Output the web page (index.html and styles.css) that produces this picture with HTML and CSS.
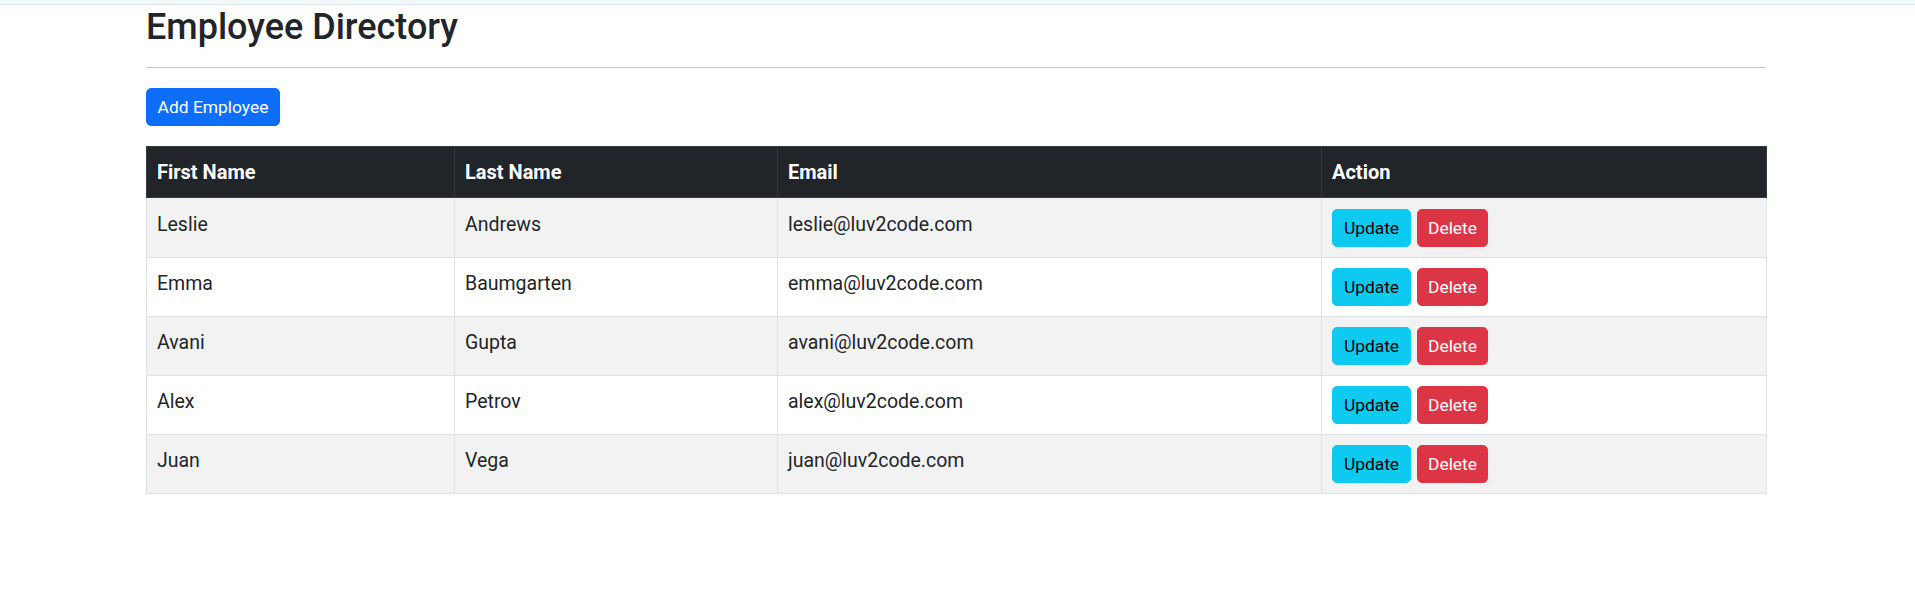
FILE: index.html
```html
<!DOCTYPE html>
<html lang="en">
<head>
<meta charset="utf-8">
<title>Employee Directory</title>
<link rel="stylesheet" href="styles.css">
</head>
<body>
<div class="topbar"></div>
<div class="container">
  <h2 class="title">Employee Directory</h2>
  <hr class="divider">
  <div class="toolbar">
    <button class="btn btn-primary btn-add">Add Employee</button>
  </div>
  <table class="table">
    <colgroup>
      <col class="col-first">
      <col class="col-last">
      <col class="col-email">
      <col class="col-action">
    </colgroup>
    <thead>
      <tr><th>First Name</th><th>Last Name</th><th>Email</th><th>Action</th></tr>
    </thead>
    <tbody>
      <tr>
        <td>Leslie</td><td>Andrews</td><td>leslie@luv2code.com</td>
        <td><div class="row-actions"><button class="btn btn-info btn-update">Update</button><button class="btn btn-danger btn-delete">Delete</button></div></td>
      </tr>
      <tr>
        <td>Emma</td><td>Baumgarten</td><td>emma@luv2code.com</td>
        <td><div class="row-actions"><button class="btn btn-info btn-update">Update</button><button class="btn btn-danger btn-delete">Delete</button></div></td>
      </tr>
      <tr>
        <td>Avani</td><td>Gupta</td><td>avani@luv2code.com</td>
        <td><div class="row-actions"><button class="btn btn-info btn-update">Update</button><button class="btn btn-danger btn-delete">Delete</button></div></td>
      </tr>
      <tr>
        <td>Alex</td><td>Petrov</td><td>alex@luv2code.com</td>
        <td><div class="row-actions"><button class="btn btn-info btn-update">Update</button><button class="btn btn-danger btn-delete">Delete</button></div></td>
      </tr>
      <tr>
        <td>Juan</td><td>Vega</td><td>juan@luv2code.com</td>
        <td><div class="row-actions"><button class="btn btn-info btn-update">Update</button><button class="btn btn-danger btn-delete">Delete</button></div></td>
      </tr>
    </tbody>
  </table>
</div>
</body>
</html>
```
FILE: styles.css
```css
html, body {
  margin: 0;
  padding: 0;
  background: #ffffff;
}

body {
  font-family: Roboto, "Liberation Sans", Arial, sans-serif;
  font-size: 19.5px;
  line-height: 30px;
  color: #212529;
}

.topbar {
  height: 4px;
  background: #f2f8f8;
  border-bottom: 1px solid #dce9ea;
}

.container {
  width: 1620px;
  margin-left: 146px;
}

.title {
  margin: 1px 0 0;
  font-size: 36px;
  line-height: 43px;
  font-weight: 500;
  color: #212529;
}

.divider {
  margin: 18px 0 0;
  height: 0;
  border: 0;
  border-top: 1px solid #c9cacb;
}

.toolbar {
  display: flex;
  margin-top: 20px;
}

.btn {
  display: block;
  box-sizing: border-box;
  height: 38px;
  padding: 0 10px;
  border: 1px solid transparent;
  border-radius: 5px;
  font-family: Roboto, "Liberation Sans", Arial, sans-serif;
  font-size: 17.4px;
  line-height: 36px;
  text-align: center;
  cursor: pointer;
}

.btn-primary {
  background: #0d6efd;
  border-color: #0d6efd;
  color: #ffffff;
}

.btn-info {
  background: #0dcaf0;
  border-color: #0dcaf0;
  color: #000000;
}

.btn-danger {
  background: #dc3545;
  border-color: #dc3545;
  color: #ffffff;
}

.btn-add {
  width: 134px;
}

.btn-update {
  width: 79px;
}

.btn-delete {
  width: 71px;
}

.table {
  margin-top: 20px;
  width: 1620px;
  table-layout: fixed;
  border-collapse: collapse;
}

.col-first { width: 308px; }
.col-last { width: 323px; }
.col-email { width: 544px; }
.col-action { width: 445px; }

.table th,
.table td {
  padding: 10px;
  text-align: left;
  vertical-align: top;
  border: 1px solid #dee2e6;
}

.table td {
  line-height: 32px;
}

.table th {
  background: #212529;
  color: #ffffff;
  font-weight: 700;
  font-size: 20px;
  border-color: #373b3e;
}

.table tbody tr:first-child td {
  padding-top: 11px;
}

.table tbody tr:nth-child(odd) td {
  background: #f2f2f2;
}

.row-actions {
  display: flex;
  gap: 6px;
}
```
